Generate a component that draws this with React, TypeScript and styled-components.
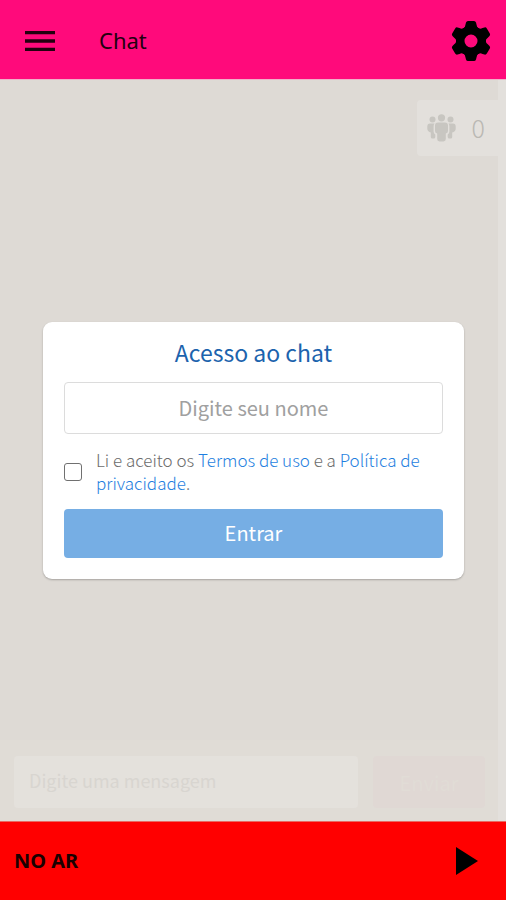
import React, { useState } from "react";
import styled, { createGlobalStyle } from "styled-components";
import { MdMenu } from "react-icons/md";

const GlobalStyle = createGlobalStyle`
  *, *::before, *::after { box-sizing: border-box; }
  body { margin: 0; font-family: "Noto Sans CJK SC", "Noto Sans", sans-serif; }
  button, input { font: inherit; }
`;

const Page = styled.div`
  display: flex;
  flex-direction: column;
  min-height: 100vh;
  background: #dedad5;
`;

const TopBar = styled.header`
  display: flex;
  align-items: center;
  min-height: 80px;
  padding: 2px 14px 0 20px;
  background: #ff0a7b;
  border-bottom: 1px solid #f0b0c8;
`;

const IconButton = styled.button`
  display: flex;
  align-items: center;
  justify-content: center;
  padding: 0;
  border: 0;
  background: none;
  color: #000;
  cursor: pointer;
`;

const PageTitle = styled.h1`
  flex: 1;
  margin: 0 0 0 39px;
  padding-bottom: 2px;
  font-family: "Noto Sans", sans-serif;
  font-size: 22px;
  line-height: 30px;
  font-weight: 400;
  color: #22000f;
`;

const Main = styled.main`
  position: relative;
  display: flex;
  flex: 1;
`;

const ChatPane = styled.section`
  display: flex;
  flex: 1;
  flex-direction: column;
  justify-content: space-between;
  min-width: 0;
`;

const ScrollTrack = styled.div`
  width: 8px;
  background: #e3e0dc;
`;

const OnlineCount = styled.div`
  display: flex;
  align-items: center;
  align-self: flex-end;
  gap: 16px;
  height: 56px;
  margin-top: 20px;
  padding: 0 13px 0 10px;
  border-radius: 4px 0 0 4px;
  background: #e3e0dc;
  color: #c8c6c1;
  font-size: 25px;
  line-height: 32px;
`;

const CountValue = styled.span`
  padding-bottom: 2px;
  font-weight: 300;
  color: #bab8b3;
`;

const Composer = styled.form`
  display: flex;
  gap: 15px;
  padding: 16px 13px 13px 14px;
  background: #e0dcd6;
`;

const MessageInput = styled.input`
  flex: 1;
  min-width: 0;
  height: 52px;
  padding: 0 15px 4px;
  border: 0;
  border-radius: 4px;
  background: #e4e1dc;
  color: #d8d5d0;
  font-size: 18px;
  &::placeholder { color: #d8d5d0; opacity: 1; }
`;

const SendButton = styled.button`
  width: 112px;
  height: 52px;
  border: 0;
  border-radius: 4px;
  background: #e0d8d4;
  color: #e1dcd6;
  font-size: 20px;
`;

const Overlay = styled.div`
  position: absolute;
  inset: 0;
  display: flex;
  align-items: center;
  justify-content: center;
  padding: 0 42px 0 43px;
`;

const AccessCard = styled.form`
  display: flex;
  flex: 1;
  flex-direction: column;
  max-width: 600px;
  padding: 16px 21px 21px;
  border-radius: 9px;
  background: #fff;
  box-shadow: 0 1px 2px rgba(0, 0, 0, 0.25);
`;

const CardTitle = styled.h2`
  margin: 0 0 16px;
  font-size: 23px;
  line-height: 28px;
  font-weight: 400;
  text-align: center;
  color: #1c63ad;
`;

const NameInput = styled.input`
  width: 100%;
  height: 52px;
  padding: 0 12px 2px;
  border: 1px solid #dcdcdc;
  border-radius: 4px;
  background: #fff;
  color: #555;
  font-size: 20px;
  text-align: center;
  &::placeholder { color: #a0a0a0; opacity: 1; }
`;

const Consent = styled.div`
  display: flex;
  align-items: center;
  gap: 14px;
  margin: 14px 0 13px;
`;

const Checkbox = styled.input`
  appearance: none;
  flex: none;
  width: 18px;
  height: 18px;
  margin: 0;
  border: 1px solid #707070;
  border-radius: 3px;
  background: #fff;
  &:checked { background: #3d8de0; }
`;

const ConsentLabel = styled.label`
  padding-bottom: 2px;
  font-size: 17px;
  font-weight: 300;
  line-height: 23px;
  color: #6c6c6c;
`;

const TextLink = styled.a`
  color: #1f7fe0;
  text-decoration: none;
`;

const EnterButton = styled.button`
  height: 49px;
  padding: 0 0 2px;
  border: 0;
  border-radius: 4px;
  background: #76aee4;
  color: #fff;
  font-size: 20px;
  cursor: pointer;
`;

const PlayerBar = styled.footer`
  display: flex;
  align-items: center;
  justify-content: space-between;
  min-height: 79px;
  padding: 0 28px 0 14px;
  background: #ff0000;
  border-top: 1px solid #e86a62;
  color: #1a0000;
  font-family: "Noto Sans", sans-serif;
  font-size: 20px;
  line-height: 26px;
  font-weight: 700;
`;

function GearIcon() {
  return (
    <svg width="42" height="42" viewBox="-21 -21 42 42" fill="currentColor" aria-hidden="true">
      <circle r="10.75" fill="none" stroke="currentColor" strokeWidth="8.5" />
      {[0, 60, 120, 180, 240, 300].map((angle) => (
        <path
          key={angle}
          transform={`rotate(${angle})`}
          d="M-8-12Q-5.500-14-5.500-16.500L-5-18.500Q-4.500-20-3-20H3Q4.500-20 5-18.500L5.500-16.500Q5.500-14 8-12z"
        />
      ))}
    </svg>
  );
}

function PeopleIcon() {
  return (
    <svg width="29" height="28" viewBox="0 0 29 28" fill="currentColor" aria-hidden="true">
      <circle cx="5.5" cy="5.5" r="3" />
      <circle cx="23.5" cy="5.5" r="3" />
      <circle cx="14.5" cy="3.8" r="3.6" />
      <path d="M3 9.500h4.500q-.9 1.200-.9 3v5q0 2 1.700 3v2.500q0 1.500-1.600 1.500H5.300q-1.500 0-1.500-1.500v-4.500Q.3 17.500.3 14.500v-2q0-3 2.700-3z" />
      <path d="M26 9.500h-4.500q.9 1.200.9 3v5q0 2-1.700 3v2.500q0 1.500 1.600 1.500h1.400q1.500 0 1.500-1.500v-4.500q3.500-1 3.500-4v-2q0-3-2.700-3z" />
      <path d="M11 8.500h7q3 0 3 3v5.500q0 2-2.200 2.600v5.400q0 2.400-2.300 2.400h-4q-2.300 0-2.300-2.400v-5.400Q8 19 8 17v-5.500q0-3 3-3z" />
    </svg>
  );
}

function PlayIcon() {
  return (
    <svg width="22" height="28" viewBox="0 0 22 28" fill="currentColor" aria-hidden="true">
      <path d="M0 0v28l22-14z" />
    </svg>
  );
}

export default function App() {
  const [accepted, setAccepted] = useState(false);

  return (
    <Page>
      <GlobalStyle />
      <TopBar>
        <IconButton type="button" aria-label="Menu">
          <MdMenu size={40} fill="#22000f" />
        </IconButton>
        <PageTitle>Chat</PageTitle>
        <IconButton type="button" aria-label="Configurações">
          <GearIcon />
        </IconButton>
      </TopBar>
      <Main>
        <ChatPane>
          <OnlineCount>
            <PeopleIcon />
            <CountValue>0</CountValue>
          </OnlineCount>
          <Composer onSubmit={(e) => e.preventDefault()}>
            <MessageInput aria-label="Mensagem" placeholder="Digite uma mensagem" />
            <SendButton type="submit">Enviar</SendButton>
          </Composer>
        </ChatPane>
        <ScrollTrack />
        <Overlay>
          <AccessCard onSubmit={(e) => e.preventDefault()}>
            <CardTitle>Acesso ao chat</CardTitle>
            <NameInput aria-label="Nome" placeholder="Digite seu nome" />
            <Consent>
              <Checkbox
                id="consent"
                type="checkbox"
                checked={accepted}
                onChange={(e) => setAccepted(e.target.checked)}
              />
              <ConsentLabel htmlFor="consent">
                Li e aceito os <TextLink href="#termos">Termos de uso</TextLink> e a{" "}
                <TextLink href="#privacidade">Política de privacidade</TextLink>.
              </ConsentLabel>
            </Consent>
            <EnterButton type="submit">Entrar</EnterButton>
          </AccessCard>
        </Overlay>
      </Main>
      <PlayerBar>
        <span>NO AR</span>
        <IconButton type="button" aria-label="Reproduzir">
          <PlayIcon />
        </IconButton>
      </PlayerBar>
    </Page>
  );
}
